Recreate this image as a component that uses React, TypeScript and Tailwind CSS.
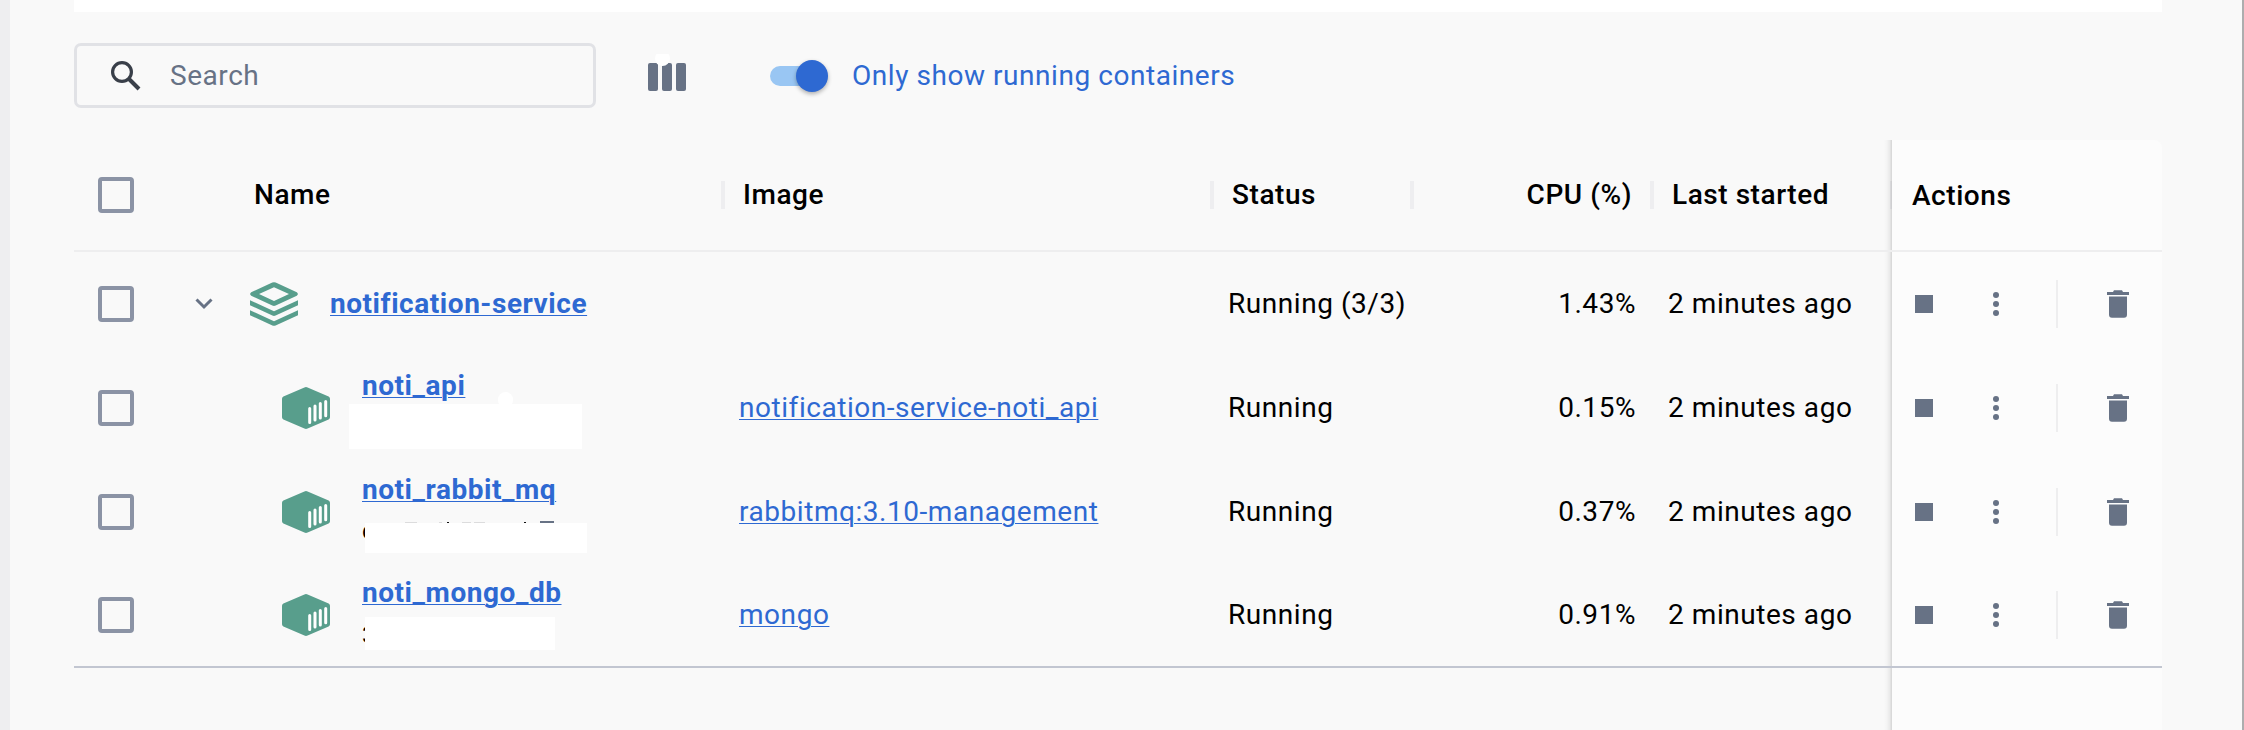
import React from "react";

const Check = () => (
  <span className="block h-9 w-9 shrink-0 rounded-[4px] border-4 border-[#8b93a5]" />
);

const Stack = () => (
  <svg className="block h-[44px] w-[48px]" viewBox="0 0 48 44" fill="#589e8c">
    <path fillRule="evenodd" d="M22.3.6Q24 -.2 25.7.6L46.8 10.2Q49 12 46.8 13.7L25.7 23.6Q24 24.4 22.3 23.6L1.2 13.7Q-1 12 1.2 10.2ZM24 5.2L9 12L24 19L39 12Z" />
    <path d="M0 18.2L24 29.3L48 18.2V23.2L25.6 33.6Q24 34.4 22.4 33.6L0 23.2Z" />
    <path d="M0 28.2L24 39.2L48 28.2V33.2L25.6 43.4Q24 44.2 22.4 43.4L0 33.2Z" />
  </svg>
);

const Cube = () => (
  <svg className="block h-[42px] w-[48px]" viewBox="0 0 48 42">
    <path fill="#589e8c" d="M22.4.5Q24 -.3 25.6.5L46.6 9.6Q48 10.3 48 11.8V30.2Q48 31.7 46.6 32.4L25.6 41.5Q24 42.3 22.4 41.5L1.4 32.4Q0 31.7 0 30.2V11.8Q0 10.3 1.4 9.6Z" />
    <path stroke="#fff" strokeWidth="3" strokeLinecap="round" d="M27.7 21.5V35.5M33 19V33M38.3 16.5V31M43.7 14.5V28.7" />
  </svg>
);

const Trash = () => (
  <svg className="block h-[28px] w-[22px]" viewBox="0 0 22 28" fill="#677285">
    <path d="M2 6.5H20V24.5Q20 27.7 17 27.7H5Q2 27.7 2 24.5ZM0 2H6L7 .3H15L16 2H22V5H0Z" />
  </svg>
);

const cols = "grid grid-cols-[647px_489px_200px_240px_242px_270px]";
const edge =
  "relative bg-[#fcfcfc] before:absolute before:inset-y-0 before:-left-2 before:w-2 before:bg-[linear-gradient(to_left,rgba(0,0,0,0.15),rgba(0,0,0,0.06)_30%,rgba(0,0,0,0.02)_65%,transparent)]";

const rows = [
  { name: "notification-service", image: "", status: "Running (3/3)", cpu: "1.43%", h: "h-[104px]" },
  { name: "noti_api", image: "notification-service-noti_api", status: "Running", cpu: "0.15%", h: "h-[104px]" },
  { name: "noti_rabbit_mq", image: "rabbitmq:3.10-management", status: "Running", cpu: "0.37%", h: "h-[104px]" },
  { name: "noti_mongo_db", image: "mongo", status: "Running", cpu: "0.91%", h: "h-[102px]" },
];

const link = "text-[#2e69d2] underline decoration-1 underline-offset-2";

function Subtitle({ i }: { i: number }) {
  if (i === 1)
    return (
      <>
        <span className="absolute left-[424px] top-[36px] h-4 w-[15px] rounded-full bg-white" />
        <span className="absolute left-[275px] top-[48px] h-[45px] w-[233px] bg-white" />
      </>
    );
  if (i === 2)
    return (
      <>
        <span className="absolute left-[288px] top-[56px] text-[24px] leading-[30px] text-black">c</span>
        <svg className="absolute left-[291px] top-[61px] h-[2px] w-[200px]" viewBox="0 0 200 2">
          <path fill="#dcdcdd" d="M40 1h12v1h-12zM74 1h3v1h-3zM97 1h9v1h-9zM109 1h11v1h-11z" />
          <path fill="#111" d="M82 1h2v1h-2zM159 1h2v1h-2z" />
          <path fill="#677285" d="M175 0h14v2h-14z" />
        </svg>
        <span className="absolute left-[291px] top-[63px] h-[30px] w-[222px] bg-white" />
      </>
    );
  return (
    <>
      <span className="absolute left-[288px] top-[56px] text-[24px] leading-[30px] text-black">3</span>
      <span className="absolute left-[291px] top-[53px] h-[33px] w-[190px] bg-white" />
    </>
  );
}

export default function App() {
  return (
    <div className="flex h-[730px] w-[2244px] overflow-hidden border-l-[10px] border-r-2 border-l-[#eeeef0] border-r-[#adadae] bg-[#f9f9f9] pl-16 font-['Roboto',sans-serif] text-[28px] leading-[36px] tracking-[0.55px] text-black">
      <div className="flex w-[2088px] flex-col">
        <div className="h-3 bg-white" />
        <div className="mt-[31px] flex h-[65px] items-center">
          <div className="flex h-[65px] w-[522px] items-center rounded-[7px] border-[3px] border-[#e1e2e6] pl-[34px] text-[#677285]">
            <svg className="h-[30px] w-[30px]" viewBox="0 0 30 30" fill="none" stroke="#393f49">
              <circle cx="11" cy="11" r="9.4" strokeWidth="3.2" />
              <path d="M18 18L28 28" strokeWidth="4" />
            </svg>
            <span className="ml-[29px]">Search</span>
          </div>
          <svg className="ml-[52px] h-[44px] w-[38px]" viewBox="0 0 38 44">
            <g fill="#677285">
              <rect y="9" width="10" height="28" rx="2" />
              <rect x="14" y="9" width="10" height="28" rx="2" />
              <rect x="28" y="9" width="10" height="28" rx="2" />
            </g>
            <ellipse cx="14.5" cy="4.5" rx="7.5" ry="7.5" fill="#fff" />
          </svg>
          <div className="relative ml-[84px] flex h-8 w-[58px] items-center">
            <div className="h-5 w-[52px] rounded-full bg-[#99c6f3]" />
            <div className="absolute right-0 top-0 h-8 w-8 rounded-full bg-[#2e69d2] shadow-[0_2px_4px_rgba(0,0,0,0.3)]" />
          </div>
          <span className="ml-6 text-[#2e69d2]">Only show running containers</span>
        </div>
        <div className="mt-8 flex flex-1 flex-col">
          <div className={`${cols} h-[112px] border-b-2 border-[#eeeeef] font-medium`}>
            <div className="flex items-center justify-between pl-6">
              <Check />
              <span className="ml-[120px] flex-1">Name</span>
              <span className="-mr-1 h-7 w-1 bg-[#eeeef0]" />
            </div>
            {["Image", "Status"].map((t) => (
              <div key={t} className="flex items-center justify-between pl-[22px]">
                <span>{t}</span>
                <span className="-mr-1 h-7 w-1 bg-[#eeeef0]" />
              </div>
            ))}
            <div className="flex items-center justify-end">
              <span className="mr-[18px]">CPU (%)</span>
              <span className="-mr-1 h-7 w-1 bg-[#eeeef0]" />
            </div>
            <div className="flex items-center justify-between pl-[22px]">
              <span>Last started</span>
              <span className="h-7 w-[2px] bg-[#eeeef0]" />
            </div>
            <div className={`${edge} flex items-center rounded-tr-[8px] pl-5 pt-px`}>Actions</div>
          </div>
          {rows.map((r, i) => (
            <div key={r.name} className={`${cols} ${r.h}`}>
              <div className="relative flex items-center pl-6">
                <Check />
                {i === 0 ? (
                  <>
                    <svg className="ml-[61px] h-3 w-[18px]" viewBox="0 0 18 12" fill="none" stroke="#677285" strokeWidth="3">
                      <path d="M1.5 1.5L9 9L16.5 1.5" />
                    </svg>
                    <div className="ml-[37px]"><Stack /></div>
                    <span className={`ml-8 font-bold ${link}`}>{r.name}</span>
                  </>
                ) : (
                  <>
                    <div className="ml-[148px]"><Cube /></div>
                    <span className={`mb-[44px] ml-8 font-bold ${link}`}>{r.name}</span>
                    <Subtitle i={i} />
                  </>
                )}
              </div>
              <div className="flex items-center pl-[18px]"><span className={link}>{r.image}</span></div>
              <div className="flex items-center whitespace-nowrap pl-[18px]">{r.status}</div>
              <div className="flex items-center justify-end pr-[14px]">{r.cpu}</div>
              <div className="flex items-center pl-[18px]">2 minutes ago</div>
              <div className={`${edge} flex items-center pl-[23px]`}>
                <span className="h-[18px] w-[18px] bg-[#677285]" />
                <svg className="ml-[60px] h-6 w-[6px]" viewBox="0 0 6 24" fill="#677285">
                  <circle cx="3" cy="3" r="3" /><circle cx="3" cy="12" r="3" /><circle cx="3" cy="21" r="3" />
                </svg>
                <span className="ml-[57px] h-12 w-[2px] bg-[#eeeeef]" />
                <div className="ml-[49px]"><Trash /></div>
              </div>
            </div>
          ))}
          <div className="h-[2px] bg-[#c2c6d1]" />
          <div className={`${cols} flex-1`}>
            <div className={`${edge} col-start-6`} />
          </div>
        </div>
      </div>
    </div>
  );
}
